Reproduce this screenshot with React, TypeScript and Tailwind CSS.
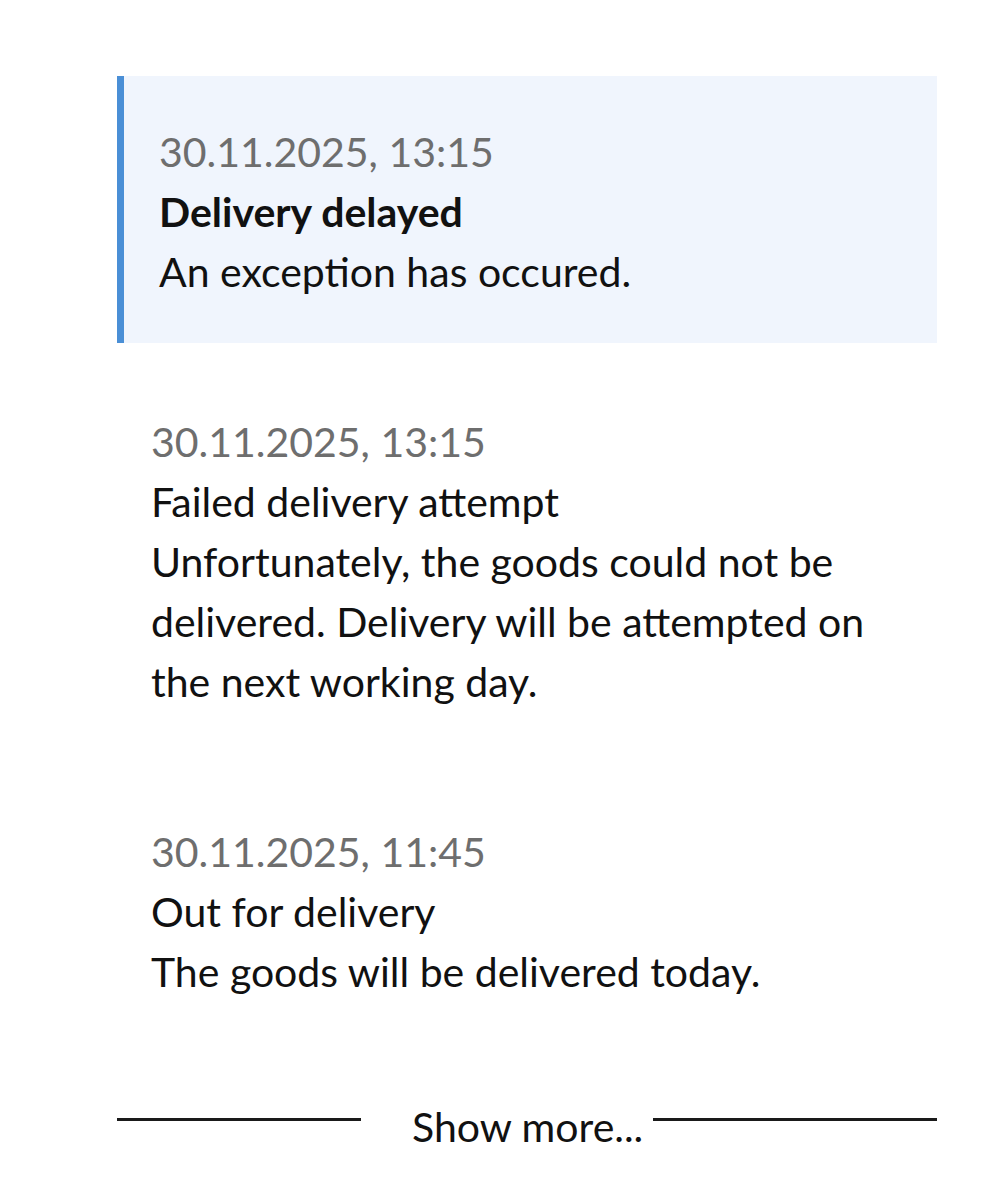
type TrackingEvent = {
  date: string;
  title: string;
  text: string;
  current?: boolean;
};

const events: TrackingEvent[] = [
  { date: "30.11.2025, 13:15", title: "Delivery delayed", text: "An exception has occured.", current: true },
  {
    date: "30.11.2025, 13:15",
    title: "Failed delivery attempt",
    text: "Unfortunately, the goods could not be delivered. Delivery will be attempted on the next working day.",
  },
  { date: "30.11.2025, 11:45", title: "Out for delivery", text: "The goods will be delivered today." },
];

function EventItem({ event }: { event: TrackingEvent }) {
  return (
    <div
      className={
        event.current
          ? "border-l-[7px] border-[#4a8fd6] bg-[#f0f5fd] pb-[41px] pl-[35px] pr-[34px] pt-[46px]"
          : "pb-[41px] pl-[34px] pr-[34px] pt-[46px]"
      }
    >
      <div className="text-[#6e6e6e]">{event.date}</div>
      <div className={event.current ? "font-bold text-[#111]" : "text-[#111]"}>{event.title}</div>
      <div className="text-[#111]">{event.text}</div>
    </div>
  );
}

export default function App() {
  return (
    <div className="min-h-[1199px] bg-white pt-[76px] font-['Lato',sans-serif] text-[41px] leading-[60px]">
      <div className="ml-[117px] w-[820px]">
        <div className="flex flex-col gap-[23px]">
          {events.map((e, i) => (
            <EventItem key={i} event={e} />
          ))}
        </div>

        {/* show more */}
        <div className="mt-[54px] flex items-center">
          <div className="mb-[16px] h-[3px] w-[244px] bg-[#1a1a1a]" />
          <button className="ml-[51px] mr-[10px] text-[#111]">Show more...</button>
          <div className="mb-[16px] h-[3px] flex-1 bg-[#1a1a1a]" />
        </div>
      </div>
    </div>
  );
}
